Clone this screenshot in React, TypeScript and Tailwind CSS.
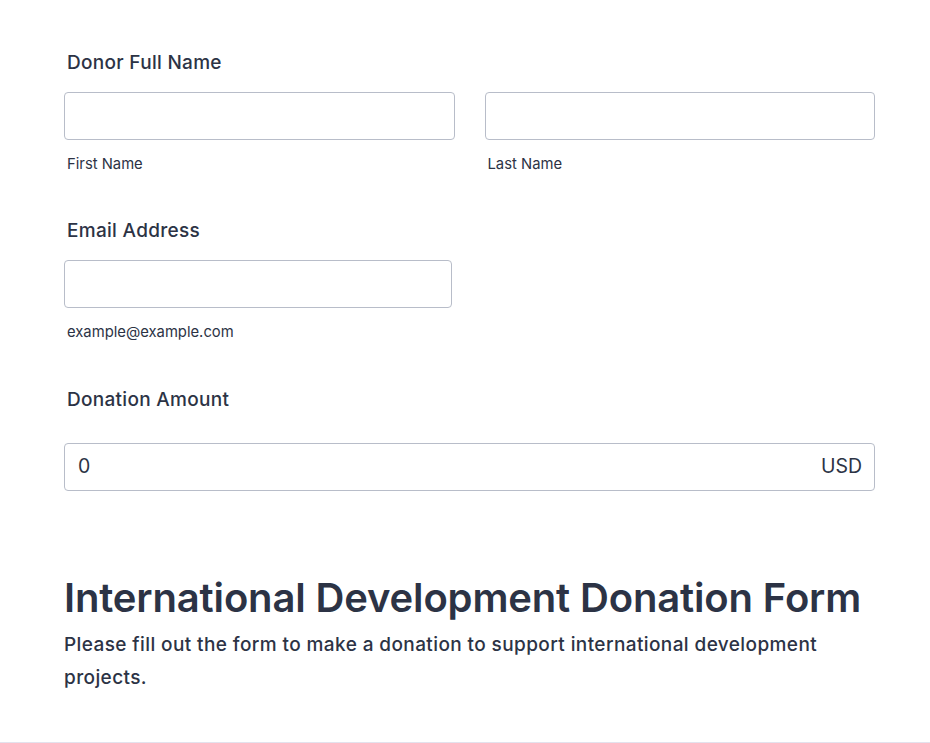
const inputCls =
  'block h-[48px] w-full rounded-[4px] border border-[#b8bdc9] bg-white px-[13px] text-[19px] text-[#2c3345] outline-none';

const Label = ({ children, className = '' }: { children: React.ReactNode; className?: string }) => (
  <label className={`block pl-[3px] text-[19px] font-medium leading-[27px] tracking-[0.3px] text-[#2c3345] ${className}`}>
    {children}
  </label>
);

const SubLabel = ({ children }: { children: React.ReactNode }) => (
  <span className="mt-[14px] block pl-[3px] text-[14.8px] leading-[20px] text-[#2c3345]">{children}</span>
);

export default function App() {
  return (
    <div className="min-h-[743px] w-full border-b border-[#e3e2ed] bg-white font-['Inter',sans-serif] text-[#2c3345]">
      <div className="ml-[64px] w-[811px] pt-[49px]">
        <Label className="mb-[16px]">Donor Full Name</Label>
        <div className="flex gap-[30px]">
          <div className="flex-1">
            <input className={inputCls} />
            <SubLabel>First Name</SubLabel>
          </div>
          <div className="flex-1">
            <input className={inputCls} />
            <SubLabel>Last Name</SubLabel>
          </div>
        </div>

        <Label className="mb-[16px] mt-[43px]">Email Address</Label>
        <div className="w-[388px]">
          <input className={inputCls} />
          <SubLabel>example@example.com</SubLabel>
        </div>

        <Label className="mb-[30px] mt-[44px]">Donation Amount</Label>
        <div className="flex h-[48px] items-center justify-between rounded-[4px] border border-[#b8bdc9] bg-white pl-[13px] pr-[12px] text-[19.5px]">
          <span>0</span>
          <span>USD</span>
        </div>

        <h1 className="mt-[83px] text-[40px] font-semibold leading-[48px] tracking-[-0.15px] text-[#2c3345]">
          International Development Donation Form
        </h1>
        <p className="mt-[6px] text-[19px] font-medium leading-[33px] tracking-[0.4px] text-[#2c3345]">
          Please fill out the form to make a donation to support international development projects.
        </p>
      </div>
    </div>
  );
}
